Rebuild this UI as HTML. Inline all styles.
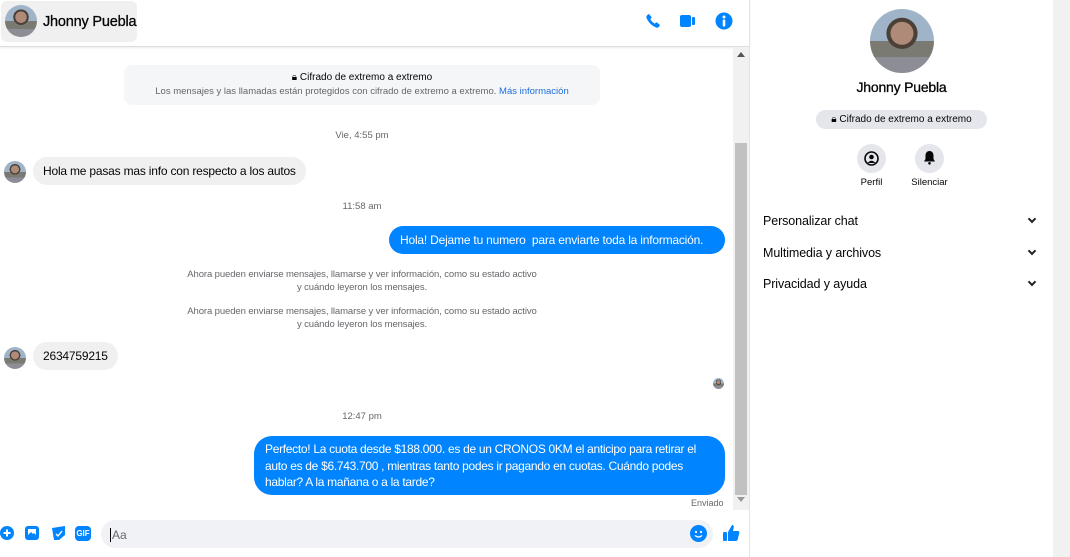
<!DOCTYPE html>
<html><head><meta charset="utf-8"><style>
*{margin:0;padding:0;box-sizing:border-box}
body{width:1070px;height:557px;overflow:hidden;background:#fff;font-family:"Liberation Sans",sans-serif;color:#050505;position:relative}
.a{position:absolute}
.av{border-radius:50%;background:radial-gradient(circle at 50% 38%,#b08a78 0 22%,#4a4038 23% 30%,transparent 31%),linear-gradient(#9fb4c8 0 50%,#7a7a72 50% 75%,#8d8d95 75%);}
.bub{position:absolute;border-radius:18px;font-size:12px;line-height:18px;padding:8px 12px;letter-spacing:-.2px}
.in{background:#f0f0f0;color:#050505}
.out{background:#0084ff;color:#fff}
.ts{position:absolute;font-size:9.5px;color:#65676b;text-align:center}
.sys{position:absolute;font-size:9.5px;color:#65676b;text-align:center;line-height:13px;width:350px;left:187px;letter-spacing:-.1px}
.row{position:absolute;left:763px;font-size:12.5px;color:#050505;letter-spacing:-.1px}
.chev{position:absolute;left:1029px;width:6px;height:6px;border-right:2px solid #222;border-bottom:2px solid #222;transform:rotate(45deg)}
</style></head><body>
<div class="a" style="left:0;top:0;width:750px;height:47px;border-bottom:1px solid #ddd;box-shadow:0 1px 2px rgba(0,0,0,.08)"></div>
<div class="a" style="left:1px;top:1px;width:136px;height:41px;background:#f0f0f0;border-radius:6px"></div>
<div class="a av" style="left:5px;top:5px;width:32px;height:32px"></div>
<div class="a" style="left:43px;top:14px;font-size:14.5px;letter-spacing:-.2px;-webkit-text-stroke:.3px #050505">Jhonny Puebla</div>
<svg class="a" style="left:645px;top:13px" width="16" height="16" viewBox="0 0 24 24"><path fill="#0084ff" d="M6.6 2.2l3 3.6c.5.6.4 1.4-.1 1.9L8 9.2c1.2 2.7 3.6 5.1 6.8 6.8l1.5-1.5c.5-.5 1.3-.6 1.9-.1l3.6 3c.6.5.6 1.4.1 2l-1.700 1.9c-.8.8-2 1-3 .6C10.3 19.5 4.5 13.7 2.1 6.8c-.3-1 0-2.100.7-2.8L4.6 2.1c.6-.6 1.5-.5 2 .1z"/></svg>
<svg class="a" style="left:679px;top:13px" width="18" height="16" viewBox="0 0 18 16"><rect x="1" y="2" width="11" height="12" rx="2" fill="#0084ff"/><rect x="13" y="4" width="3" height="8" rx="1" fill="#0084ff"/></svg>
<svg class="a" style="left:715px;top:12px" width="18" height="18" viewBox="0 0 18 18"><circle cx="9" cy="9" r="8.5" fill="#0084ff"/><circle cx="9" cy="5" r="1.5" fill="#fff"/><rect x="7.7" y="7.5" width="2.6" height="7" rx="1" fill="#fff"/></svg>
<div class="a" style="left:733px;top:48px;width:16px;height:462px;background:#f1f1f1"></div>
<div class="a" style="left:735px;top:143px;width:12px;height:352px;background:#c1c1c1"></div>
<div class="a" style="left:737px;top:52px;width:0;height:0;border-left:4px solid transparent;border-right:4px solid transparent;border-bottom:5px solid #555"></div>
<div class="a" style="left:737px;top:497px;width:0;height:0;border-left:4px solid transparent;border-right:4px solid transparent;border-top:5px solid #999"></div>
<div class="a" style="left:124px;top:65px;width:476px;height:40px;background:#f5f6f7;border-radius:8px"></div>
<div class="a" style="left:124px;top:72px;width:476px;text-align:center;font-size:10px">&#128274;&#xFE0E; Cifrado de extremo a extremo</div>
<div class="a" style="left:124px;top:86px;width:476px;text-align:center;font-size:9.5px;color:#65676b">Los mensajes y las llamadas están protegidos con cifrado de extremo a extremo. <span style="color:#216fdb">Más información</span></div>
<div class="ts" style="left:300px;top:130px;width:124px">Vie, 4:55 pm</div>
<div class="a av" style="left:4px;top:161px;width:22px;height:22px"></div>
<div class="bub in" style="left:33px;top:157px;height:28px;padding:5px 10px">Hola me pasas mas info con respecto a los autos</div>
<div class="ts" style="left:300px;top:201px;width:124px">11:58 am</div>
<div class="bub out" style="left:389px;top:226px;width:336px;height:28px;padding:5px 11px">Hola! Dejame tu numero&nbsp; para enviarte toda la información.</div>
<div class="sys" style="top:268px">Ahora pueden enviarse mensajes, llamarse y ver información, como su estado activo y cuándo leyeron los mensajes.</div>
<div class="sys" style="top:305px">Ahora pueden enviarse mensajes, llamarse y ver información, como su estado activo y cuándo leyeron los mensajes.</div>
<div class="a av" style="left:4px;top:347px;width:22px;height:22px"></div>
<div class="bub in" style="left:33px;top:342px;height:28px;padding:5px 10px">2634759215</div>
<div class="a av" style="left:713px;top:378px;width:11px;height:11px"></div>
<div class="ts" style="left:300px;top:411px;width:124px">12:47 pm</div>
<div class="bub out" style="left:254px;top:436px;width:471px;height:59px;padding:5px 11px;line-height:16.5px;letter-spacing:-.3px">Perfecto! La cuota desde $188.000. es de un CRONOS 0KM el anticipo para retirar el<br>auto es de $6.743.700 , mientras tanto podes ir pagando en cuotas. Cuándo podes<br>hablar? A la mañana o a la tarde?</div>
<div class="a" style="left:691px;top:498px;font-size:9px;color:#65676b">Enviado</div>
<svg class="a" style="left:0;top:526px" width="14" height="14" viewBox="0 0 14 14"><circle cx="7" cy="7" r="7" fill="#0084ff"/><path d="M7 3.5v7M3.5 7h7" stroke="#fff" stroke-width="2"/></svg>
<svg class="a" style="left:25px;top:525px" width="15" height="16" viewBox="0 0 15 16"><rect x="0" y="1" width="14" height="14" rx="3" fill="#0084ff"/><rect x="3" y="4" width="8" height="6" fill="#fff"/><path d="M3 10l3-3 2 2 1-1 2 2z" fill="#0084ff"/></svg>
<svg class="a" style="left:51px;top:525px" width="15" height="16" viewBox="0 0 15 16"><path d="M1 3l13-2v9l-6 5H3z" fill="#0084ff"/><path d="M5 9l2 2 4-5" stroke="#fff" stroke-width="1.4" fill="none"/></svg>
<div class="a" style="left:75px;top:526px;width:16px;height:15px;background:#0084ff;border-radius:4px;color:#fff;font-size:8px;font-weight:bold;text-align:center;line-height:15px">GIF</div>
<div class="a" style="left:101px;top:520px;width:612px;height:28px;background:#f0f2f5;border-radius:14px"></div>
<div class="a" style="left:110px;top:528px;width:1px;height:14px;background:#000"></div>
<div class="a" style="left:112px;top:528px;font-size:12px;color:#65676b">Aa</div>
<svg class="a" style="left:690px;top:525px" width="17" height="17" viewBox="0 0 17 17"><circle cx="8.5" cy="8.5" r="8.5" fill="#0084ff"/><circle cx="6" cy="7" r="1.1" fill="#fff"/><circle cx="11" cy="7" r="1.1" fill="#fff"/><path d="M5 10.5q3.5 3 7 0" stroke="#fff" stroke-width="1.3" fill="none"/></svg>
<svg class="a" style="left:722px;top:524px" width="18" height="18" viewBox="0 0 18 18"><rect x="1" y="8" width="4" height="9" rx="1" fill="#0084ff"/><path d="M6 8l4-7c1.5 0 2 1 1.7 2.5L11 7h5c1 0 1.6 1 1.3 2l-1.6 6.5c-.3 1-1 1.5-2 1.5H6z" fill="#0084ff"/></svg>
<div class="a" style="left:749px;top:0;width:1px;height:557px;background:#e4e4e4"></div>
<div class="a" style="left:1053px;top:0;width:17px;height:557px;background:#f1f1f1"></div>
<div class="a av" style="left:870px;top:9px;width:64px;height:64px"></div>
<div class="a" style="left:750px;top:79px;width:303px;text-align:center;font-size:14px;letter-spacing:-.2px;-webkit-text-stroke:.3px #050505">Jhonny Puebla</div>
<div class="a" style="left:816px;top:110px;width:171px;height:19px;background:#e4e6eb;border-radius:10px;font-size:10px;text-align:center;line-height:19px">&#128274;&#xFE0E; Cifrado de extremo a extremo</div>
<div class="a" style="left:857px;top:144px;width:29px;height:29px;border-radius:50%;background:#e4e6eb"></div>
<svg class="a" style="left:864px;top:151px" width="15" height="15" viewBox="0 0 15 15"><circle cx="7.5" cy="7.5" r="6.5" fill="none" stroke="#050505" stroke-width="1.6"/><circle cx="7.5" cy="6" r="2.3" fill="#050505"/><path d="M3.5 12q4-4.5 8 0" fill="#050505"/></svg>
<div class="a" style="left:915px;top:144px;width:29px;height:29px;border-radius:50%;background:#e4e6eb"></div>
<svg class="a" style="left:922px;top:150px" width="15" height="16" viewBox="0 0 15 16"><path d="M7.5 1c-2.5 0-4 2-4 4.5V9L2 11.5h11L11.5 9V5.5C11.5 3 10 1 7.5 1z" fill="#050505"/><circle cx="7.5" cy="13.3" r="1.3" fill="#050505"/></svg>
<div class="a" style="left:851px;top:177px;width:41px;text-align:center;font-size:9.5px">Perfil</div>
<div class="a" style="left:904px;top:177px;width:51px;text-align:center;font-size:9.5px">Silenciar</div>
<div class="row" style="top:214px">Personalizar chat</div>
<div class="row" style="top:246px">Multimedia y archivos</div>
<div class="row" style="top:277px">Privacidad y ayuda</div>
<div class="chev" style="top:216px"></div>
<div class="chev" style="top:248px"></div>
<div class="chev" style="top:279px"></div>
</body></html>
